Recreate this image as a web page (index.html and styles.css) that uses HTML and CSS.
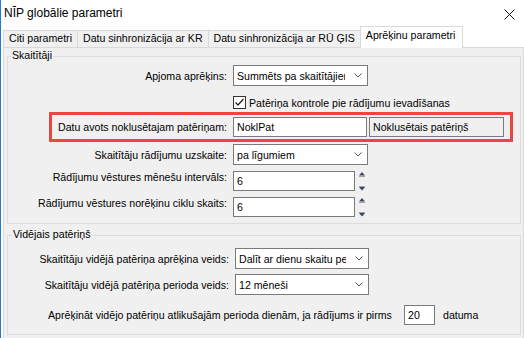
FILE: index.html
```html
<!DOCTYPE html>
<html lang="lv">
<head>
    <meta charset="UTF-8">
    <meta name="viewport" content="width=device-width, initial-scale=1.0">
    <title>NĪP globālie parametri</title>
    <link rel="stylesheet" href="styles.css">
</head>
<body>
    <div class="window">
        <div class="titlebar">
            <span class="title">NĪP globālie parametri</span>
            <svg class="close" width="11" height="11" viewBox="0 0 11 11">
                <path d="M0.5 0.5 L10.5 10.5 M10.5 0.5 L0.5 10.5" stroke="#111" stroke-width="1" fill="none"/>
            </svg>
        </div>

        <div class="tabs">
            <div class="tab">Citi parametri</div>
            <div class="tab">Datu sinhronizācija ar KR</div>
            <div class="tab">Datu sinhronizācija ar RŪ ĢIS</div>
            <div class="tab active">Aprēķinu parametri</div>
        </div>

        <div class="panel">
            <div class="group group-meters">
                <span class="group-title">Skaitītāji</span>

                <div class="row row-first">
                    <label class="label">Apjoma aprēķins:</label>
                    <div class="combo">
                        <span class="combo-text">Summēts pa skaitītājiem</span>
                        <svg class="chevron" width="8" height="5" viewBox="0 0 8 5"><path d="M0.5 0.5 L4 4 L7.5 0.5" stroke="#555" fill="none"/></svg>
                    </div>
                </div>

                <div class="row row-check">
                    <span class="checkbox">
                        <svg width="11" height="11" viewBox="0 0 11 11"><path d="M1.5 5.5 L4 8 L9.5 2" stroke="#222" stroke-width="1.3" fill="none"/></svg>
                    </span>
                    <span class="check-label">Patēriņa kontrole pie rādījumu ievadīšanas</span>
                </div>

                <div class="row row-highlight">
                    <label class="label">Datu avots noklusētajam patēriņam:</label>
                    <div class="field field-wide">NoklPat</div>
                    <div class="field field-readonly">Noklusētais patēriņš</div>
                </div>

                <div class="row row-tight">
                    <label class="label">Skaitītāju rādījumu uzskaite:</label>
                    <div class="combo">
                        <span class="combo-text">pa līgumiem</span>
                        <svg class="chevron" width="8" height="5" viewBox="0 0 8 5"><path d="M0.5 0.5 L4 4 L7.5 0.5" stroke="#555" fill="none"/></svg>
                    </div>
                </div>

                <div class="row row-spin">
                    <label class="label">Rādījumu vēstures mēnešu intervāls:</label>
                    <div class="field field-num">6</div>
                    <svg class="spinner" width="8" height="20" viewBox="0 0 8 20">
                        <polygon points="4,1 7,4.5 1,4.5" fill="#3a4560"/>
                        <rect x="1" y="5" width="6" height="1" fill="#9aa3b5"/>
                        <rect x="1" y="15" width="6" height="1" fill="#9aa3b5"/>
                        <polygon points="1,16 7,16 4,19.5" fill="#3a4560"/>
                    </svg>
                </div>

                <div class="row row-spin">
                    <label class="label">Rādījumu vēstures norēķinu ciklu skaits:</label>
                    <div class="field field-num">6</div>
                    <svg class="spinner" width="8" height="20" viewBox="0 0 8 20">
                        <polygon points="4,1 7,4.5 1,4.5" fill="#3a4560"/>
                        <rect x="1" y="5" width="6" height="1" fill="#9aa3b5"/>
                        <rect x="1" y="15" width="6" height="1" fill="#9aa3b5"/>
                        <polygon points="1,16 7,16 4,19.5" fill="#3a4560"/>
                    </svg>
                </div>
            </div>

            <div class="group group-average">
                <span class="group-title">Vidējais patēriņš</span>

                <div class="row row-first">
                    <label class="label label-wide">Skaitītāju vidējā patēriņa aprēķina veids:</label>
                    <div class="combo combo-narrow">
                        <span class="combo-text">Dalīt ar dienu skaitu periodā</span>
                        <svg class="chevron" width="8" height="5" viewBox="0 0 8 5"><path d="M0.5 0.5 L4 4 L7.5 0.5" stroke="#555" fill="none"/></svg>
                    </div>
                </div>

                <div class="row row-second">
                    <label class="label label-wide">Skaitītāju vidējā patēriņa perioda veids:</label>
                    <div class="combo combo-narrow">
                        <span class="combo-text">12 mēneši</span>
                        <svg class="chevron" width="8" height="5" viewBox="0 0 8 5"><path d="M0.5 0.5 L4 4 L7.5 0.5" stroke="#555" fill="none"/></svg>
                    </div>
                </div>

                <div class="row row-sentence">
                    <span class="sentence">Aprēķināt vidējo patēriņu atlikušajām perioda dienām, ja rādījums ir pirms</span>
                    <div class="field field-day">20</div>
                    <span class="suffix">datuma</span>
                </div>
            </div>
        </div>
    </div>
</body>
</html>
```

FILE: styles.css
```css
:root {
    --window-edge: #1a7fd4;
    --face: #f0f0f0;
    --tab-line: #d9d9d9;
    --group-line: #dcdcdc;
    --field-line: #7a7a7a;
    --highlight: #e8483f;
}

body {
    margin: 0;
    font-family: "Liberation Sans", Arial, sans-serif;
    font-size: 10.6px;
    color: #000;
}

.window {
    width: 524px;
    height: 338px;
    box-sizing: border-box;
    border-left: 1px solid var(--window-edge);
    background: #fff;
    overflow: hidden;
}

.titlebar {
    height: 26px;
    display: flex;
    align-items: center;
    justify-content: space-between;
    padding: 0 9px 0 3px;
}

.title {
    font-size: 12px;
}

.close {
    margin-top: 2px;
}

/* tab strip */
.tabs {
    height: 21px;
    display: flex;
    align-items: flex-end;
    padding-left: 2px;
}

.tab {
    height: 16px;
    line-height: 15px;
    padding: 0 5px;
    border: 1px solid var(--tab-line);
    border-bottom: none;
    border-right: none;
    background: var(--face);
    white-space: nowrap;
}

.tab.active {
    position: relative;
    height: 21px;
    line-height: 16px;
    margin-bottom: -1px;
    padding: 0 7px 0 5px;
    border-right: 1px solid var(--tab-line);
    background: #fff;
}

.panel {
    margin-left: 2px;
    height: 300px;
    border: 1px solid var(--tab-line);
    border-bottom: none;
    background: var(--face);
    padding: 8px 2px 0 3px;
}

/* group boxes */
.group {
    position: relative;
    border: 1px solid var(--group-line);
    padding-top: 8px;
}

.group-meters {
    padding-bottom: 6px;
}

.group-average {
    margin-top: 11px;
    padding-top: 12px;
    padding-bottom: 9px;
}

.group-title {
    position: absolute;
    top: -8px;
    left: 3px;
    padding: 0 1px;
    line-height: 13px;
    background: var(--face);
}

.group-average .group-title {
    left: 4px;
}

/* rows */
.row {
    display: flex;
    align-items: center;
    white-space: nowrap;
}

.row-check {
    margin-top: 10px;
    padding-left: 225px;
}

.row-highlight {
    margin: 3px 7px 0 41px;
    padding: 2px 0;
    border: 3px solid var(--highlight);
}

.row-highlight .label {
    width: 175px;
}

.row-tight {
    margin-top: 2px;
}

.row-spin {
    margin-top: 6px;
    align-items: flex-start;
}

.row-second {
    margin-top: 5px;
}

.row-sentence {
    margin-top: 10px;
    padding-left: 40px;
}

.sentence {
    width: 351px;
}

.label {
    width: 219px;
    margin-right: 6px;
    text-align: right;
}

.label-wide {
    width: 221px;
}

/* controls */
.combo,
.field {
    box-sizing: border-box;
    height: 21px;
    border: 1px solid var(--field-line);
    background: #fff;
    display: flex;
    align-items: center;
    padding-left: 3px;
}

.combo {
    width: 135px;
}

.combo-narrow {
    width: 134px;
}

.combo-text {
    flex: 1;
    overflow: hidden;
    white-space: nowrap;
}

.chevron {
    margin: 0 5px 0 9px;
    flex-shrink: 0;
}

.field {
    height: 20px;
}

.field-wide {
    width: 134px;
}

.field-readonly {
    width: 135px;
    margin-left: 2px;
    background: var(--face);
}

.field-num {
    width: 122px;
}

.field-day {
    width: 31px;
    margin: 0 8px 0 5px;
}

.spinner {
    margin-left: 3px;
}

.checkbox {
    box-sizing: border-box;
    width: 13px;
    height: 13px;
    border: 1px solid #333;
    background: #fff;
    display: flex;
    align-items: center;
    justify-content: center;
}

.check-label {
    margin-left: 3px;
}
```
